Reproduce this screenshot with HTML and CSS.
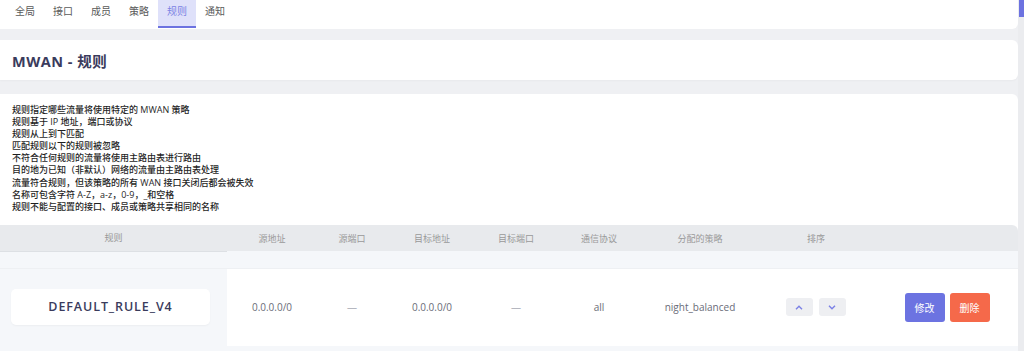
FILE: index.html
```html
<!DOCTYPE html>
<html lang="zh-CN">
<head>
  <meta charset="UTF-8">
  <title>MWAN - 规则</title>
  <link rel="stylesheet" href="styles.css">
</head>
<body>
  <div class="page">
    <div class="tabs">
      <a class="tab">全局</a>
      <a class="tab">接口</a>
      <a class="tab">成员</a>
      <a class="tab">策略</a>
      <a class="tab active">规则</a>
      <a class="tab">通知</a>
    </div>

    <div class="card title-card">
      <h2>MWAN - 规则</h2>
    </div>

    <div class="card rules-card">
      <div class="desc">
        规则指定哪些流量将使用特定的 MWAN 策略<br>
        规则基于 IP 地址，端口或协议<br>
        规则从上到下匹配<br>
        匹配规则以下的规则被忽略<br>
        不符合任何规则的流量将使用主路由表进行路由<br>
        目的地为已知（非默认）网络的流量由主路由表处理<br>
        流量符合规则，但该策略的所有 WAN 接口关闭后都会被失效<br>
        名称可包含字符 A-Z，a-z，0-9，_和空格<br>
        规则不能与配置的接口、成员或策略共享相同的名称
      </div>

      <table class="rules">
        <colgroup>
          <col style="width:227px">
          <col style="width:90px">
          <col style="width:70px">
          <col style="width:90px">
          <col style="width:78px">
          <col style="width:88px">
          <col style="width:114px">
          <col style="width:118px">
          <col style="width:143px">
        </colgroup>
        <tr class="head">
          <th class="name-col">规则</th>
          <th>源地址</th>
          <th>源端口</th>
          <th>目标地址</th>
          <th>目标端口</th>
          <th>通信协议</th>
          <th>分配的策略</th>
          <th>排序</th>
          <th></th>
        </tr>
        <tr class="spacer"><td colspan="9"></td></tr>
        <tr class="row">
          <td class="name-col"><div class="rule-name">DEFAULT_RULE_V4</div></td>
          <td>0.0.0.0/0</td>
          <td class="dash">—</td>
          <td>0.0.0.0/0</td>
          <td class="dash">—</td>
          <td>all</td>
          <td>night_balanced</td>
          <td>
            <div class="sort">
              <button class="btn-sort">
                <svg width="8" height="5" viewBox="0 0 8 5"><path d="M1 4.2 4 1.2 7 4.2" fill="none" stroke="#7b80e6" stroke-width="1.4"/></svg>
              </button>
              <button class="btn-sort">
                <svg width="8" height="5" viewBox="0 0 8 5"><path d="M1 0.8 4 3.8 7 0.8" fill="none" stroke="#7b80e6" stroke-width="1.4"/></svg>
              </button>
            </div>
          </td>
          <td>
            <div class="actions">
              <button class="btn btn-edit">修改</button>
              <button class="btn btn-del">删除</button>
            </div>
          </td>
        </tr>
        <tr class="spacer"><td class="name-col"></td><td colspan="8"></td></tr>
      </table>
    </div>
  </div>

  <div class="scrollbar"><div class="thumb"></div></div>
</body>
</html>
```

FILE: styles.css
```css
body, h2, div {
  margin: 0;
  padding: 0;
}

body {
  background: #eff0f3;
  font-family: "Open Sans", "Noto Sans CJK SC", sans-serif;
  color: #333;
  overflow: hidden;
}

.page {
  width: 1018px;
}

.card {
  background: #fff;
  border-radius: 0 6px 6px 0;
  box-shadow: 0 1px 2px rgba(0, 0, 0, 0.03);
}

/* tabs */
.tabs {
  display: flex;
  height: 29px;
  padding-left: 6px;
  background: #fff;
  border-radius: 0 0 6px 0;
}

.tab {
  width: 38px;
  height: 26px;
  line-height: 22px;
  text-align: center;
  font-size: 10px;
  color: #5a5a5a;
  border-bottom: 2px solid transparent;
}

.tab.active {
  background: #dfe1fa;
  color: #7c81e4;
  border-bottom-color: #6c72e0;
}

/* title */
.title-card {
  margin-top: 11px;
  height: 40px;
  display: flex;
  align-items: center;
  padding-left: 12px;
}

.title-card h2 {
  font-size: 14.5px;
  font-weight: 700;
  color: #3a3b5c;
  letter-spacing: 0.5px;
}

/* rules */
.rules-card {
  margin-top: 14px;
  padding-top: 10px;
  border-radius: 0 6px 0 0;
}

.desc {
  padding-left: 12px;
  font-size: 9px;
  line-height: 12.1px;
  font-weight: 500;
  color: #1f1f1f;
}

.rules {
  margin-top: 12px;
  width: 1018px;
  table-layout: fixed;
  border-collapse: collapse;
}

.rules th {
  height: 26px;
  padding: 0;
  background: #e8eaed;
  font-size: 9px;
  font-weight: 400;
  color: #999;
}

.rules th:last-child {
  border-radius: 0 6px 0 0;
}

.rules th.name-col {
  border-bottom: 1px solid #dde0e4;
}

.spacer td {
  height: 16px;
  padding: 0;
  background: #f5f7fa;
  border-bottom: 1px solid #eef0f3;
}

.row td {
  height: 77px;
  padding: 0;
  text-align: center;
  font-size: 10px;
  color: #6a6c78;
  background: #fff;
}

.row td.name-col {
  background: #f5f7fa;
}

.row td.dash {
  color: #b5b7c0;
}

.rule-name {
  margin: 0 17px 0 11px;
  height: 36px;
  line-height: 36px;
  background: #fff;
  border-radius: 5px;
  box-shadow: 0 1px 2px rgba(0, 0, 0, 0.04);
  font-size: 12.5px;
  font-weight: 600;
  letter-spacing: 0.9px;
  color: #3a3b5c;
}

.sort {
  display: flex;
  justify-content: center;
  gap: 6px;
  padding-right: 1px;
}

.btn-sort {
  width: 27px;
  height: 18px;
  border: none;
  border-radius: 3px;
  background: #eeeff2;
  padding: 0;
  display: flex;
  align-items: center;
  justify-content: center;
}

.actions {
  display: flex;
  justify-content: center;
  gap: 5px;
  padding-left: 1px;
}

.btn {
  width: 40px;
  height: 29px;
  border: none;
  border-radius: 3px;
  color: #fff;
  font-family: "Noto Sans CJK SC", sans-serif;
  font-size: 10px;
  padding: 0;
}

.btn-edit {
  background: #6c73e1;
}

.btn-del {
  background: #f5694a;
}

/* scrollbar */
.scrollbar {
  position: fixed;
  top: 0;
  right: 0;
  width: 6px;
  height: 100%;
  background: #ebecef;
}

.thumb {
  margin-left: 1px;
  height: 17px;
  background: #6c72e0;
}
```
